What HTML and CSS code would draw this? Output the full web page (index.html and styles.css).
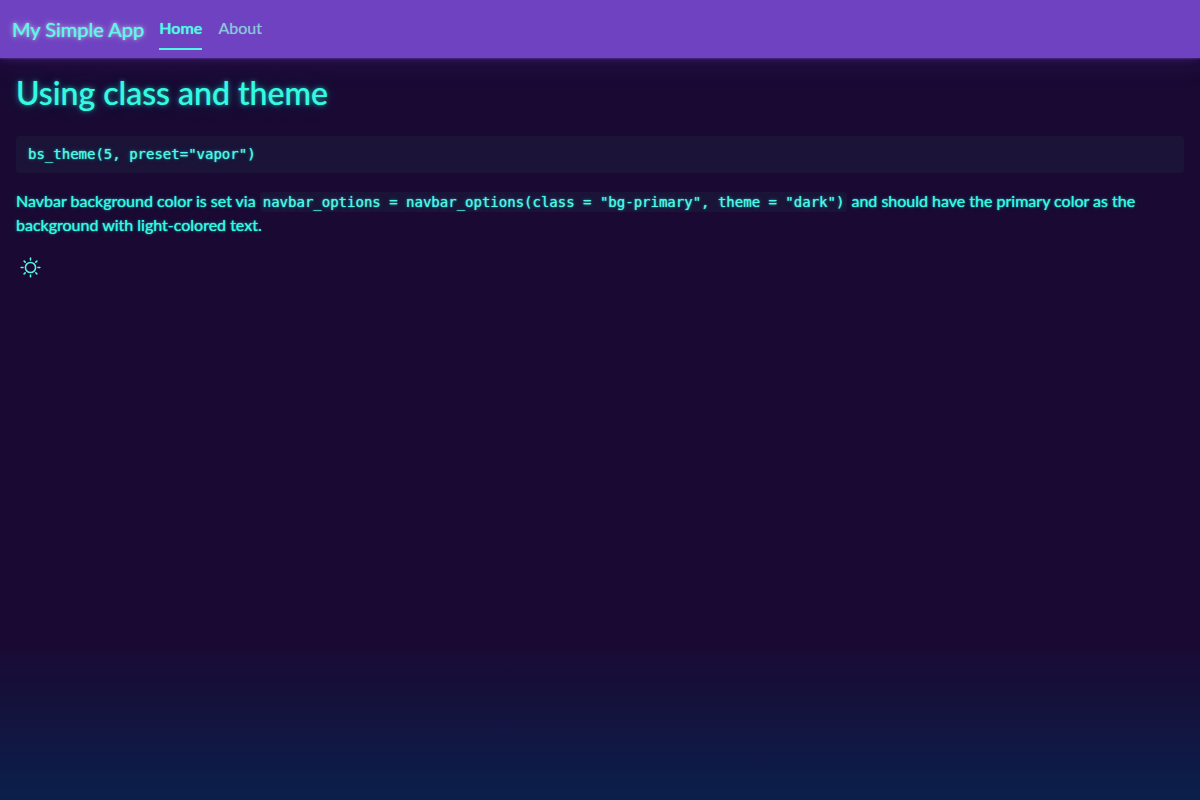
FILE: index.html
```html
<!DOCTYPE html>
<html lang="en">
<head>
<meta charset="utf-8">
<meta name="viewport" content="width=device-width, initial-scale=1">
<title>My Simple App</title>
<link rel="stylesheet" href="styles.css">
</head>
<body>
<nav class="navbar">
  <a class="navbar-brand" href="#">My Simple App</a>
  <ul class="nav-list">
    <li><a class="nav-link active" href="#home" aria-current="page">Home</a></li>
    <li><a class="nav-link" href="#about">About</a></li>
  </ul>
</nav>
<main class="content">
  <h2 class="title">Using class and theme</h2>
  <pre class="code-block"><code>bs_theme(5, preset="vapor")</code></pre>
  <p class="description">Navbar background color is set via <code class="code-inline">navbar_options = navbar_options(class = "bg-primary", theme = "dark")</code> and should have the primary color as the background with light-colored text.</p>
  <button class="mode-toggle" type="button" aria-label="Toggle color mode">
    <svg class="sun" viewBox="0 0 24 24" aria-hidden="true">
      <circle cx="12" cy="12" r="5.8"/>
      <path d="M12 1.300v2.200M12 20.500v2.200M1.300 12h2.200M20.500 12h2.200M4.700 4.700l1.200 1.200M18.100 18.100l1.200 1.200M4.700 19.300l1.200-1.200M18.100 5.900l1.200-1.200"/>
    </svg>
  </button>
</main>
</body>
</html>
```
FILE: styles.css
```css
:root {
  --primary: #6f42c1;
  --text: #32fbe2;
  --bg: #1a0933;
}

* {
  box-sizing: border-box;
}

html {
  min-height: 100%;
}

body {
  min-height: 100vh;
  margin: 0;
  background: linear-gradient(var(--bg) 80%, #0b1f4b) var(--bg);
  color: var(--text);
  font-family: Lato, sans-serif;
  font-size: 16px;
  line-height: 24px;
  text-shadow: 0 0 1px rgba(50, 251, 226, 0.9), 0 0 3px rgba(50, 251, 226, 0.4), 0 0 8px rgba(50, 251, 226, 0.2);
}

.navbar {
  display: flex;
  align-items: center;
  gap: 15px;
  height: 58px;
  padding: 0 12px;
  background: var(--primary);
  box-shadow: 0 0 2px rgba(111, 66, 193, 0.9), 0 0 8px rgba(111, 66, 193, 0.4), 0 0 32px rgba(111, 66, 193, 0.2);
}

.navbar-brand {
  color: #61f6e6;
  font-size: 20px;
  line-height: 30px;
  text-decoration: none;
  text-shadow: 0 0 1px #61f6e6, 0 0 4px rgba(255, 255, 255, 0.5), 0 0 8px rgba(255, 255, 255, 0.3), 0 0 32px rgba(255, 255, 255, 0.2);
}

.nav-list {
  display: flex;
  gap: 16px;
  margin: 0;
  padding: 0;
  list-style: none;
}

.nav-link {
  display: block;
  padding: 8px 0;
  border-bottom: 2px solid transparent;
  color: #8bc6dc;
  text-decoration: none;
  text-shadow: 0 0 1px rgba(139, 198, 220, 0.7);
}

.nav-link.active {
  border-color: #52f6e5;
  color: #52f6e5;
  font-weight: 700;
  text-shadow: 0 0 1px rgba(82, 246, 229, 0.7);
}

.content {
  padding: 16px;
}

.title {
  margin: 0 0 24px;
  font-size: 32px;
  font-weight: 500;
  line-height: 38px;
  text-shadow: 0 0 1px rgba(50, 251, 226, 0.6), 0 0 4px rgba(50, 251, 226, 0.4), 0 0 8px rgba(50, 251, 226, 0.3), 0 0 32px rgba(50, 251, 226, 0.2);
}

.code-block,
.code-inline {
  border-radius: 3px;
  background: #1b1338;
  color: #52f6e5;
  font-family: "DejaVu Sans Mono", monospace;
  font-size: 14px;
}

.code-block {
  margin: 0 0 16px;
  padding: 8px 12px;
  line-height: 21px;
  overflow: auto;
}

.code-block code {
  font: inherit;
}

.code-inline {
  padding: 2px 3px;
  line-height: 16px;
}

.description {
  margin: 0 0 16px;
}

.mode-toggle {
  display: block;
  margin: 0;
  padding: 4px;
  border: 0;
  background: transparent;
  color: #52f6e5;
  cursor: pointer;
}

.sun {
  display: block;
  width: 21px;
  height: 21px;
  fill: none;
  stroke: currentColor;
  stroke-width: 1.8;
  stroke-linecap: round;
}
```
